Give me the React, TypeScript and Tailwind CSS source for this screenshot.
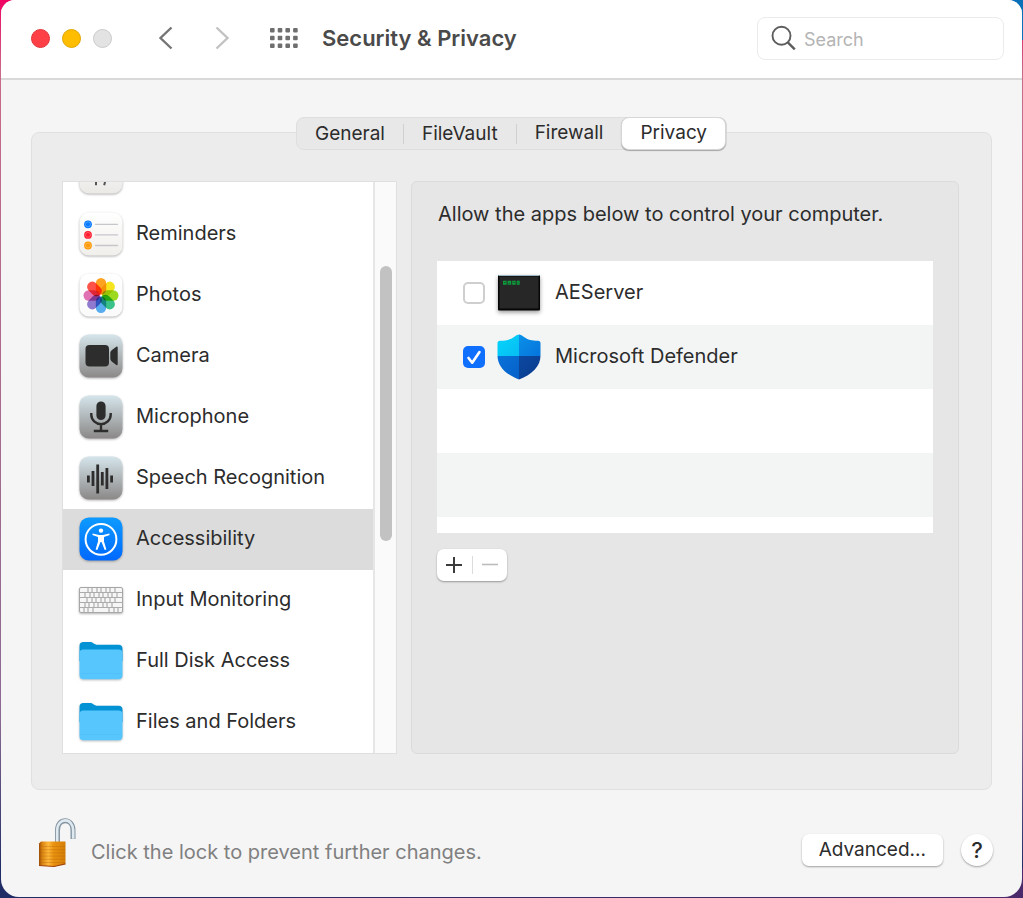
import { useState, type ReactNode } from "react";

function Tile({ id, from, to, children }: { id: string; from: string; to: string; children?: ReactNode }) {
  return (
    <svg viewBox="0 0 44 44" className="size-11 shrink-0 overflow-visible drop-shadow-[0_1px_1px_rgba(0,0,0,0.3)]" aria-hidden="true">
      <defs>
        <linearGradient id={id} x1="0" y1="0" x2="0" y2="1">
          <stop offset="0" stopColor={from} />
          <stop offset="1" stopColor={to} />
        </linearGradient>
      </defs>
      <rect x="0.5" y="0.5" width="43" height="43" rx="9.5" fill={`url(#${id})`} />
      {children}
    </svg>
  );
}

function CalendarIcon() {
  return (
    <Tile id="cal" from="#ffffff" to="#ebe9e6">
      <path d="M17 20v15.2M22.5 20h6.5L25.2 35.2" fill="none" stroke="#555" strokeWidth="2" />
    </Tile>
  );
}

function RemindersIcon() {
  const rows = [
    { y: 12.3, color: "#0a7aff" },
    { y: 22.9, color: "#ff1d2d" },
    { y: 33.5, color: "#ff9a0a" },
  ];
  return (
    <Tile id="rem" from="#ffffff" to="#f1efec">
      {rows.map((r) => (
        <g key={r.color}>
          <circle cx="9" cy={r.y} r="3.9" fill={r.color} />
          <circle cx="9" cy={r.y} r="2.5" fill="none" stroke="#fff" strokeOpacity="0.3" strokeWidth="0.8" />
          <path d={`M16.5 ${r.y}h22`} stroke="#c6c6cb" strokeWidth="1.3" strokeLinecap="round" />
        </g>
      ))}
    </Tile>
  );
}

function PhotosIcon() {
  const petals = ["#ff9500", "#f5e000", "#8fd400", "#1fb978", "#3fa0ea", "#8168c8", "#dc5fa8", "#ff3b30"];
  return (
    <Tile id="pho" from="#ffffff" to="#fafafa">
      <g style={{ isolation: "isolate" }}>
        {petals.map((c, i) => (
          <rect
            key={c}
            x="16.8"
            y="5"
            width="10.4"
            height="16.5"
            rx="5.2"
            fill={c}
            fillOpacity="0.88"
            transform={`rotate(${i * 45} 22 22.5)`}
            style={{ mixBlendMode: "multiply" }}
          />
        ))}
      </g>
    </Tile>
  );
}

function CameraIcon() {
  return (
    <Tile id="cam" from="#d5e5eb" to="#8b8887">
      <rect x="6.5" y="11" width="23.5" height="21.5" rx="4" fill="#2d2d2d" />
      <path d="M38.7 13.4v17c0 .8-.8 1-1.4.6l-4-3c-1.200-1-2-2-2-3.200v-5.800c0-1.200.8-2.200 2-3.200l4-3c.6-.4 1.400-.2 1.400.6Z" fill="#2d2d2d" />
    </Tile>
  );
}

function MicrophoneIcon() {
  return (
    <Tile id="mic" from="#d5e5eb" to="#8b8887">
      <rect x="17.400" y="6.500" width="9.200" height="18.500" rx="4.600" fill="#2d2d2d" />
      <path d="M12.300 18v1.800a9.700 9.300 0 0 0 19.400 0V18M22 29v7M14.800 36h14.400" fill="none" stroke="#2d2d2d" strokeWidth="2.400" />
    </Tile>
  );
}

function SpeechIcon() {
  return (
    <Tile id="spe" from="#d5e5eb" to="#8b8887">
      <path
        d="M9.400 19.500v7M14 15v15M18.700 8.500v29M23.300 16v13.500M27.900 12v21M32.600 19.500v7"
        stroke="#2d2d2d"
        strokeWidth="2.800"
        fill="none"
      />
    </Tile>
  );
}

function AccessibilityIcon() {
  return (
    <Tile id="acc" from="#0d9bff" to="#0068ff">
      <circle cx="22" cy="22.300" r="15.400" fill="none" stroke="#fff" strokeWidth="2" />
      <circle cx="22" cy="13.600" r="2.200" fill="#fff" />
      <path d="M13.700 16.500 20 18h4l6.300-1.500.3 1.500-5.600 1.900v4.600l2.400 8-1.700.6-3.200-8h-1l-3.200 8-1.700-.6 2.400-8v-4.600L13.400 18Z" fill="#fff" />
    </Tile>
  );
}

function KeyboardIcon() {
  return (
    <svg viewBox="0 0 44 26" className="h-[26px] w-11 shrink-0 drop-shadow-[0_1px_1px_rgba(0,0,0,0.3)]" aria-hidden="true">
      <rect x="0.500" y="0.500" width="43" height="25" rx="1.500" fill="#f6f6f6" stroke="#a6a6a6" />
      <path
        d="M1 5.500h42M1 10.500h42M1 15.500h42M1 20.500h42M9 1v4.500M13 1v4.500M18 1v4.500M22 1v4.500M27 1v4.500M31 1v4.500M36 1v4.500M6 5.500v5M11 5.500v5M15 5.500v5M20 5.500v5M24 5.500v5M29 5.500v5M33 5.500v5M38 5.500v5M8 10.500v5M13 10.500v5M17 10.500v5M22 10.500v5M26 10.500v5M31 10.500v5M36 10.500v5M6 15.500v5M10 15.500v5M15 15.500v5M19 15.500v5M24 15.500v5M28 15.500v5M33 15.500v5M5 20.500v5M9 20.500v5M14 20.500v5M30 20.500v5M35 20.500v5M39 20.500v5"
        stroke="#acacac"
        strokeWidth="1.200"
        fill="none"
      />
    </svg>
  );
}

function FolderIcon() {
  return (
    <svg viewBox="0 0 44 39" className="h-[39px] w-11 shrink-0 overflow-visible drop-shadow-[0_1px_1px_rgba(0,0,0,0.25)]" aria-hidden="true">
      <path d="M.5 5A4 4 0 0 1 4.500 1h6.500c3.500 0 4 2.800 7.500 2.800h21a4 4 0 0 1 4 4V20H.5Z" fill="#0393d5" />
      <path d="M.5 12.500a4 4 0 0 1 4-4h35a4 4 0 0 1 4 4v21.700a4 4 0 0 1-4 4h-35a4 4 0 0 1-4-4Z" fill="#57c6fd" />
      <path d="M1.500 32.500h41" stroke="#50c0f8" strokeWidth="0.800" />
    </svg>
  );
}

function TerminalIcon() {
  return (
    <svg viewBox="0 0 44 38" className="h-[38px] w-11 shrink-0 overflow-visible drop-shadow-[0_2px_2px_rgba(0,0,0,0.4)]" aria-hidden="true">
      <rect x="1" y="1" width="42" height="35.500" rx="1" fill="#070707" />
      <path d="M1.500 1.500h41" stroke="#9dbac4" strokeWidth="1" />
      <rect x="2.500" y="2.500" width="39" height="32" fill="#272727" />
      <path d="M6 8.800h3.600M10.600 8.800h3.600M15.200 8.800h3.400M19.700 8.800h3" stroke="#0c9c3c" strokeWidth="4" />
      <path d="M7 8.500h1.500M11.500 9.500h1.500M16.200 8.500h1.500M20.500 9h1.200" stroke="#1d5230" strokeWidth="1" />
    </svg>
  );
}

function DefenderIcon() {
  return (
    <svg viewBox="0 0 44 46" className="h-[46px] w-11 shrink-0" aria-hidden="true">
      <defs>
        <clipPath id="shield">
          <path d="M22 .5c1.500 0 3 1 4.600 2.200C31 6 35 6.500 41 6.800c1.600.1 2.500 1 2.500 2.500v12.200c0 11-8.500 19-21.500 24C9 40.500.5 32.500.5 21.500V9.300C.5 7.800 1.400 6.900 3 6.800 9 6.500 13 6 17.400 2.700 19 1.500 20.500.5 22 .5Z" />
        </clipPath>
        <linearGradient id="q1" x1="0" y1="0" x2="1" y2="1">
          <stop offset="0" stopColor="#03d5fc" />
          <stop offset="1" stopColor="#08bdf2" />
        </linearGradient>
        <linearGradient id="q2" x1="0" y1="0" x2="1" y2="1">
          <stop offset="0" stopColor="#0a91e8" />
          <stop offset="1" stopColor="#0674dc" />
        </linearGradient>
        <linearGradient id="q3" x1="0" y1="0" x2="1" y2="1">
          <stop offset="0" stopColor="#0872d9" />
          <stop offset="1" stopColor="#0660c8" />
        </linearGradient>
        <linearGradient id="q4" x1="0" y1="0" x2="1" y2="1">
          <stop offset="0" stopColor="#0b49a0" />
          <stop offset="1" stopColor="#0a3a8c" />
        </linearGradient>
      </defs>
      <g clipPath="url(#shield)">
        <path d="M0 0h22v22H0z" fill="url(#q1)" />
        <path d="M22 0h22v22H22z" fill="url(#q2)" />
        <path d="M0 22h22v24H0z" fill="url(#q3)" />
        <path d="M22 22h22v24H22z" fill="url(#q4)" />
      </g>
    </svg>
  );
}

function LockIcon() {
  return (
    <svg viewBox="0 0 38 50" className="h-[50px] w-[38px] shrink-0" aria-hidden="true">
      <defs>
        <linearGradient id="brass" x1="0" y1="0" x2="1" y2="0">
          <stop offset="0" stopColor="#9a4a08" />
          <stop offset="0.120" stopColor="#d98410" />
          <stop offset="0.350" stopColor="#ffb83a" />
          <stop offset="0.550" stopColor="#ea9310" />
          <stop offset="1" stopColor="#d47d06" />
        </linearGradient>
      </defs>
      <path d="M19.500 25V12.500C19.500 6 23 2.800 27.300 2.800S35 6.500 35 12.500V21" fill="none" stroke="#8595a2" strokeWidth="5" />
      <path d="M19.200 25V12.500C19.200 6 23 2.400 27.300 2.400S35.200 6.500 35.200 12.500V20.800" fill="none" stroke="#dfe9f0" strokeWidth="2.600" />
      <path d="M1 25.500 3 23.500h24.500v22.300L16 48.500 1 47.500Z" fill="url(#brass)" />
      <path d="M2 28.500h25M2 31.700h25M2 34.900h25M2 38.100h25M2 41.300h25M2 44.500h25" stroke="#b0650a" strokeOpacity="0.400" strokeWidth="0.900" />
      <path d="M1 47.500 16 48.500 27.500 45.800" fill="none" stroke="#a2430a" strokeWidth="1.200" />
    </svg>
  );
}

const categories = [
  { name: "Reminders", icon: <RemindersIcon /> },
  { name: "Photos", icon: <PhotosIcon /> },
  { name: "Camera", icon: <CameraIcon /> },
  { name: "Microphone", icon: <MicrophoneIcon /> },
  { name: "Speech Recognition", icon: <SpeechIcon /> },
  { name: "Accessibility", icon: <AccessibilityIcon /> },
  { name: "Input Monitoring", icon: <KeyboardIcon /> },
  { name: "Full Disk Access", icon: <FolderIcon /> },
  { name: "Files and Folders", icon: <FolderIcon /> },
];

const tabs = ["General", "FileVault", "Firewall", "Privacy"];

function TitleBar() {
  return (
    <header className="flex h-20 shrink-0 items-center border-b-2 border-[#d9d9d9] bg-white pr-[18px] pb-0.5 pl-[30px]">
      <div className="flex gap-3">
        <button aria-label="Close" className="size-[19px] rounded-full border border-[#e2343a] bg-[#ff4147]" />
        <button aria-label="Minimize" className="size-[19px] rounded-full border border-[#e0a500] bg-[#ffbd00]" />
        <button aria-label="Zoom" className="size-[19px] rounded-full border border-[#cbcbcb] bg-[#e3e3e3]" />
      </div>
      <nav className="ml-[46px] flex items-center gap-10">
        <button aria-label="Back">
          <svg viewBox="0 0 16 24" className="h-6 w-4" fill="none" stroke="#757575" strokeWidth="2.400">
            <path d="M13.500 1.500 2.500 12l11 10.500" />
          </svg>
        </button>
        <button aria-label="Forward" disabled>
          <svg viewBox="0 0 16 24" className="h-6 w-4" fill="none" stroke="#c2c2c2" strokeWidth="2.400">
            <path d="m2.500 1.500 11 10.500-11 10.500" />
          </svg>
        </button>
        <button aria-label="Show All">
          <svg viewBox="0 0 28 20" className="h-5 w-7" fill="#6e6e6e">
            {[0, 7.700, 15.400].map((y) => [0, 7.700, 15.400, 23.100].map((x) => <rect key={`${x}-${y}`} x={x} y={y} width="4.600" height="4.600" rx="1" />))}
          </svg>
        </button>
      </nav>
      <h1 className="ml-6 text-[22px] font-semibold text-[#4a4a4a]">Security &amp; Privacy</h1>
      <label className="ml-auto flex h-[43px] w-[247px] items-center gap-2 rounded-lg border border-[#ebebeb] px-3">
        <svg viewBox="0 0 26 26" className="size-[26px] shrink-0" fill="none" stroke="#5d5d5d" aria-hidden="true">
          <circle cx="11.500" cy="10.700" r="9" strokeWidth="1.900" />
          <path d="m17.800 17.300 7 7" strokeWidth="2.400" />
        </svg>
        <input type="search" aria-label="Search" placeholder="Search" className="w-full min-w-0 bg-transparent pt-1 text-lg outline-none placeholder:text-[#b4b4b4]" />
      </label>
    </header>
  );
}

export default function App() {
  const [tab, setTab] = useState("Privacy");
  const [selected, setSelected] = useState("Accessibility");
  const [allowed, setAllowed] = useState([false, true]);
  const apps = [
    { name: "AEServer", icon: <TerminalIcon /> },
    { name: "Microsoft Defender", icon: <DefenderIcon /> },
  ];

  return (
    <div className="min-h-screen bg-[linear-gradient(to_bottom,#f00463,#c96a8a_8%,#8a6a92_80%,#1f2c66_97%)] font-['Inter',sans-serif] text-xl text-[#2c2c2c]">
      <div className="flex min-h-screen bg-[linear-gradient(to_right,transparent_50%,#0a70b8_50%)] bg-[length:100%_40px] bg-no-repeat">
        <div className="flex w-full bg-[linear-gradient(to_right,#1f2c66,#4b2a6b)] bg-[length:100%_30px] bg-bottom bg-no-repeat px-px pb-px">
          <div className="flex flex-1 flex-col overflow-hidden rounded-t-[14px] rounded-b-[18px] bg-[#f5f5f5]">
            <TitleBar />
            <main className="flex flex-1 flex-col px-[30px] pt-[37px]">
              <div role="tablist" className="z-10 -mb-[18px] flex h-[33px] self-center rounded-lg border border-[#dedede] bg-[#e8e8e8] text-[19px]">
                {tabs.map((t, i) => (
                  <button
                    key={t}
                    role="tab"
                    aria-selected={t === tab}
                    onClick={() => setTab(t)}
                    className={
                      t === tab
                        ? "-my-px flex items-center rounded-lg border border-[#d6d6d6] bg-white px-[18px] shadow-[0_1px_1px_rgba(0,0,0,0.3)]"
                        : "flex items-center"
                    }
                  >
                    <span className={t === tab ? "" : i < 2 ? "border-r border-[#d0d0d0] px-[18px] leading-5" : "px-[18px]"}>{t}</span>
                  </button>
                ))}
              </div>

              <section className="flex flex-1 gap-3.5 rounded-lg border border-[#e0e0e0] bg-[#ececec] pt-12 pr-8 pb-[35px] pl-[30px]">
                <div className="flex w-[335px] shrink-0 border border-[#dfdfdf] bg-white">
                  <ul className="flex-1 overflow-hidden">
                    <li className="flex h-[22px] items-end overflow-hidden px-4 pb-2.5" aria-label="Calendars">
                      <CalendarIcon />
                    </li>
                    {categories.map((c) => (
                      <li key={c.name}>
                        <button
                          onClick={() => setSelected(c.name)}
                          aria-current={c.name === selected}
                          className={`flex h-[61px] w-full items-center gap-[13px] px-4 pb-0.5 text-left ${c.name === selected ? "bg-[#dcdcdc]" : ""}`}
                        >
                          {c.icon}
                          <span className="pb-0.5">{c.name}</span>
                        </button>
                      </li>
                    ))}
                  </ul>
                  <div className="flex w-[23px] justify-center border-l-2 border-[#e6e6e6] bg-[#fafafa] pt-[84px]">
                    <div className="h-[275px] w-3 rounded-full bg-[#c2c2c2]" />
                  </div>
                </div>

                <div className="min-w-0 flex-1 rounded-md border border-[#dbdbdb] bg-[#e6e6e6] px-[25px] pt-[18px]">
                  <h2 className="px-px leading-7">Allow the apps below to control your computer.</h2>
                  <ul className="mt-[33px] h-[272px] bg-white">
                    {apps.map((a, i) => (
                      <li key={a.name} className={i % 2 ? "bg-[#f3f5f5]" : ""}>
                        <label className="flex h-16 items-center px-[26px]">
                          <span className="grid">
                            <input
                              type="checkbox"
                              checked={allowed[i]}
                              onChange={() => setAllowed(allowed.map((v, j) => (j === i ? !v : v)))}
                              className="peer col-start-1 row-start-1 size-[22px] appearance-none rounded-[5px] border-2 border-[#cfcfcf] bg-white checked:border-0 checked:bg-[#0f6fff]"
                            />
                            <svg viewBox="0 0 22 22" className="pointer-events-none invisible col-start-1 row-start-1 size-[22px] peer-checked:visible" fill="none" stroke="#fff" strokeWidth="2.600" strokeLinecap="round" strokeLinejoin="round" aria-hidden="true">
                              <path d="m5.500 12 3.700 4.700L16.500 6" />
                            </svg>
                          </span>
                          <span className="mr-3.5 ml-3 flex">{a.icon}</span>
                          <span className="pb-0.5">{a.name}</span>
                        </label>
                      </li>
                    ))}
                    <li className="h-16" aria-hidden="true" />
                    <li className="h-16 bg-[#f3f5f5]" aria-hidden="true" />
                  </ul>
                  <div className="mt-4 flex h-8 w-[70px] items-center rounded-[7px] bg-white shadow-[0_1px_2px_rgba(0,0,0,0.35)]">
                    <button aria-label="Add" className="flex h-full flex-1 items-center justify-center">
                      <svg viewBox="0 0 16 16" className="size-4" stroke="#3b3b3b" strokeWidth="2">
                        <path d="M8 0v16M0 8h16" />
                      </svg>
                    </button>
                    <span className="h-[18px] w-px bg-[#dcdcdc]" />
                    <button aria-label="Remove" disabled className="flex h-full flex-1 items-center justify-center">
                      <svg viewBox="0 0 16 16" className="size-4" stroke="#bcbcbc" strokeWidth="1.600">
                        <path d="M0 7.500h16" />
                      </svg>
                    </button>
                  </div>
                </div>
              </section>
            </main>
            <footer className="flex h-[107px] shrink-0 items-center pr-[29px] pl-[37px]">
              <button aria-label="Lock" className="mr-[15px] pb-0.5">
                <LockIcon />
              </button>
              <p className="pt-4 text-[#808080]">Click the lock to prevent further changes.</p>
              <div className="ml-auto flex gap-[18px] pt-3">
                <button className="h-8 rounded-[7px] bg-white px-[17px] text-[19px] leading-7 shadow-[0_1px_2px_rgba(0,0,0,0.35)]">Advanced...</button>
                <button aria-label="Help" className="size-8 rounded-full bg-white text-[22px] leading-8 font-medium shadow-[0_1px_2px_rgba(0,0,0,0.35)]">
                  ?
                </button>
              </div>
            </footer>
          </div>
        </div>
      </div>
    </div>
  );
}
